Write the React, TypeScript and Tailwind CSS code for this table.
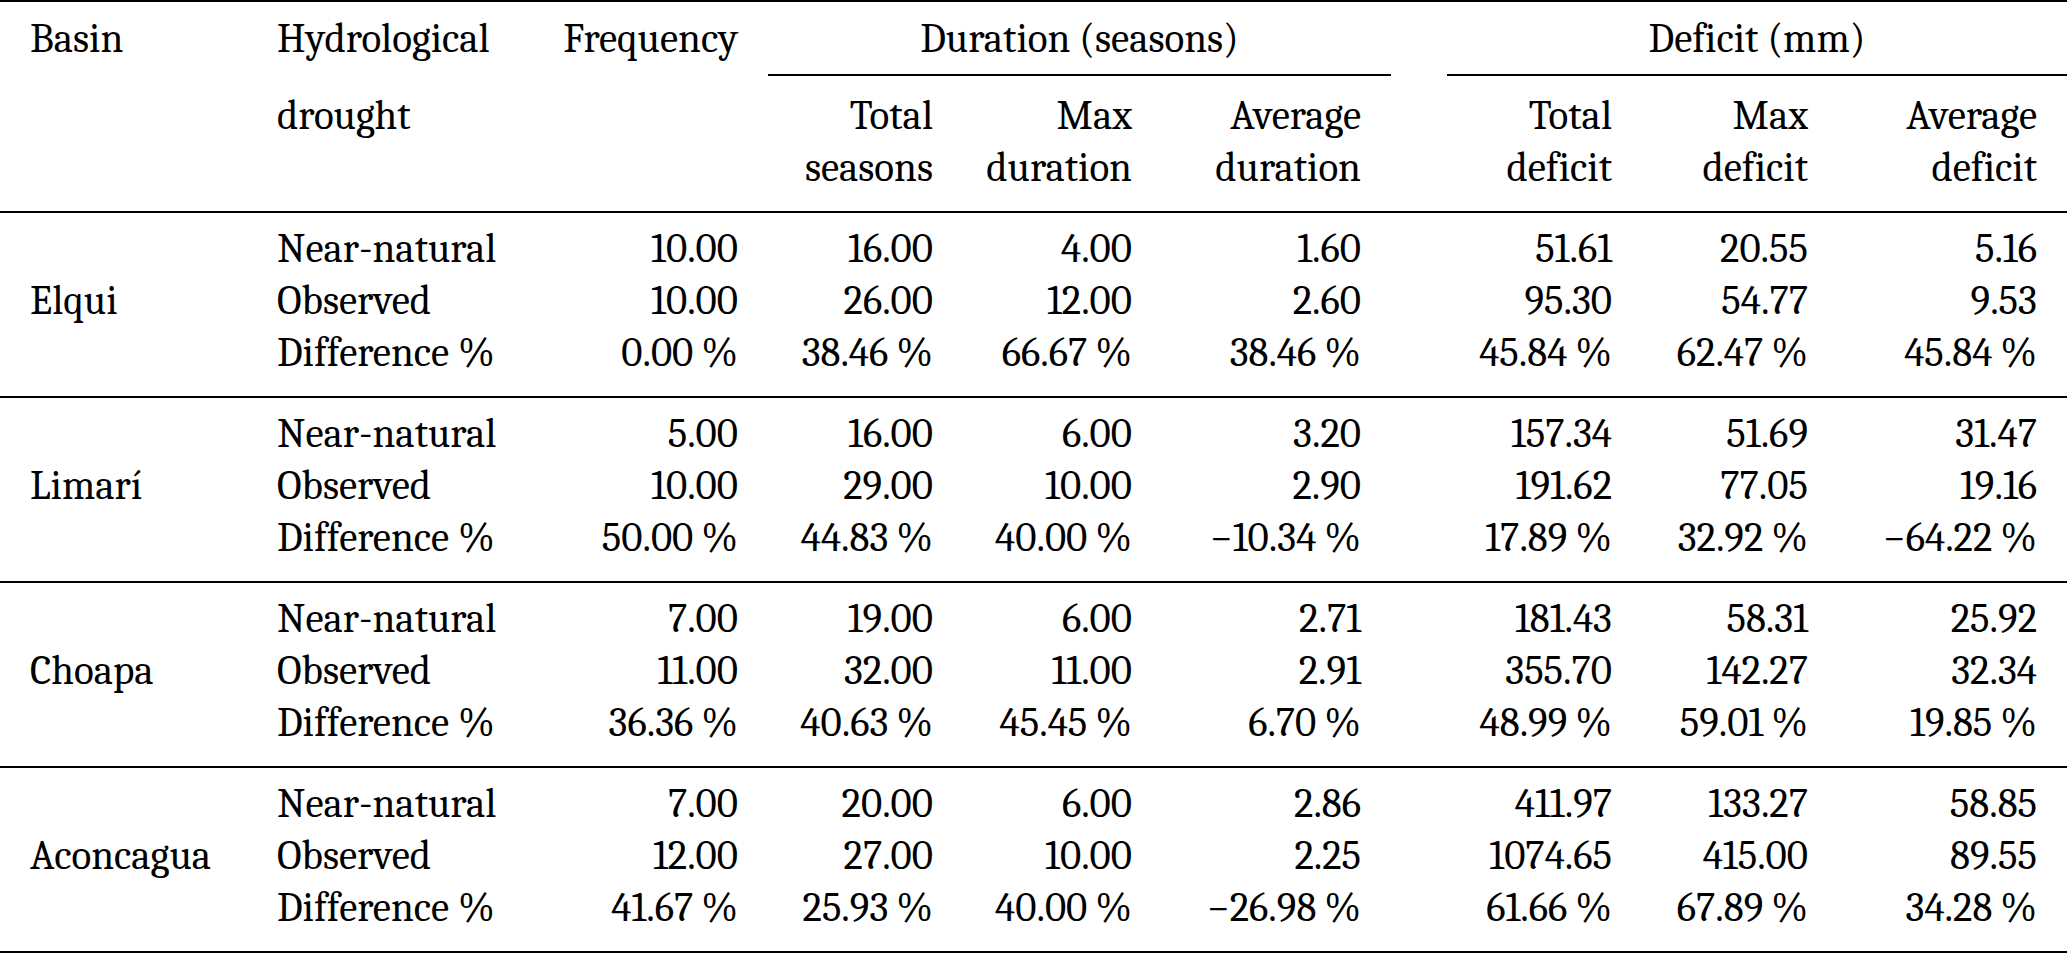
const cols =
  "grid grid-cols-[247px_281px_240px_195px_199px_229px_56px_195px_196px_229px]";

type Group = { basin: string; rows: string[][] };

const groups: Group[] = [
  {
    basin: "Elqui",
    rows: [
      ["Near-natural", "10.00", "16.00", "4.00", "1.60", "51.61", "20.55", "5.16"],
      ["Observed", "10.00", "26.00", "12.00", "2.60", "95.30", "54.77", "9.53"],
      ["Difference %", "0.00\u2009%", "38.46\u2009%", "66.67\u2009%", "38.46\u2009%", "45.84\u2009%", "62.47\u2009%", "45.84\u2009%"],
    ],
  },
  {
    basin: "Limarí",
    rows: [
      ["Near-natural", "5.00", "16.00", "6.00", "3.20", "157.34", "51.69", "31.47"],
      ["Observed", "10.00", "29.00", "10.00", "2.90", "191.62", "77.05", "19.16"],
      ["Difference %", "50.00\u2009%", "44.83\u2009%", "40.00\u2009%", "\u221210.34\u2009%", "17.89\u2009%", "32.92\u2009%", "\u221264.22\u2009%"],
    ],
  },
  {
    basin: "Choapa",
    rows: [
      ["Near-natural", "7.00", "19.00", "6.00", "2.71", "181.43", "58.31", "25.92"],
      ["Observed", "11.00", "32.00", "11.00", "2.91", "355.70", "142.27", "32.34"],
      ["Difference %", "36.36\u2009%", "40.63\u2009%", "45.45\u2009%", "6.70\u2009%", "48.99\u2009%", "59.01\u2009%", "19.85\u2009%"],
    ],
  },
  {
    basin: "Aconcagua",
    rows: [
      ["Near-natural", "7.00", "20.00", "6.00", "2.86", "411.97", "133.27", "58.85"],
      ["Observed", "12.00", "27.00", "10.00", "2.25", "1074.65", "415.00", "89.55"],
      ["Difference %", "41.67\u2009%", "25.93\u2009%", "40.00\u2009%", "\u221226.98\u2009%", "61.66\u2009%", "67.89\u2009%", "34.28\u2009%"],
    ],
  },
];

function Num({ value }: { value: string }) {
  return <div className="pr-[30px] text-right whitespace-nowrap">{value}</div>;
}

function Header() {
  const sub = "pr-[30px] pt-[14px] pb-[17px] text-right";
  return (
    <div className={`${cols} border-b-2 border-black`}>
      <div className="pl-[30px] pt-[11px]">Basin</div>
      <div className="pl-[30px] pt-[11px]">Hydrological</div>
      <div className="pr-[30px] pt-[11px] text-right">Frequency</div>
      <div className="col-span-3 pt-[11px] pb-[9px] border-b-2 border-black text-center">
        Duration (seasons)
      </div>
      <div />
      <div className="col-span-3 pt-[11px] pb-[9px] border-b-2 border-black text-center">
        Deficit (mm)
      </div>

      <div />
      <div className="pl-[30px] pt-[14px] pb-[17px]">drought</div>
      <div />
      <div className={sub}>
        Total
        <br />
        seasons
      </div>
      <div className={sub}>
        Max
        <br />
        duration
      </div>
      <div className={sub}>
        Average
        <br />
        duration
      </div>
      <div />
      <div className={sub}>
        Total
        <br />
        deficit
      </div>
      <div className={sub}>
        Max
        <br />
        deficit
      </div>
      <div className={sub}>
        Average
        <br />
        deficit
      </div>
    </div>
  );
}

function BasinGroup({ group, first }: { group: Group; first: boolean }) {
  return (
    <div className={`${cols} pt-[10px] pb-[17px] ${first ? "" : "border-t-2 border-black"}`}>
      <div className="row-span-3 flex items-center pl-[30px]">{group.basin}</div>
      {group.rows.map((row) => (
        <div key={row[0]} className="contents">
          <div className="pl-[30px] whitespace-nowrap">{row[0]}</div>
          <Num value={row[1]} />
          <Num value={row[2]} />
          <Num value={row[3]} />
          <Num value={row[4]} />
          <div />
          <Num value={row[5]} />
          <Num value={row[6]} />
          <Num value={row[7]} />
        </div>
      ))}
    </div>
  );
}

export default function App() {
  return (
    <div className="w-[2067px] h-[953px] bg-white text-black font-serif text-[41px] leading-[52px]">
      <div className="border-t-2 border-b-2 border-black">
        <Header />
        {groups.map((g, i) => (
          <BasinGroup key={g.basin} group={g} first={i === 0} />
        ))}
      </div>
    </div>
  );
}
